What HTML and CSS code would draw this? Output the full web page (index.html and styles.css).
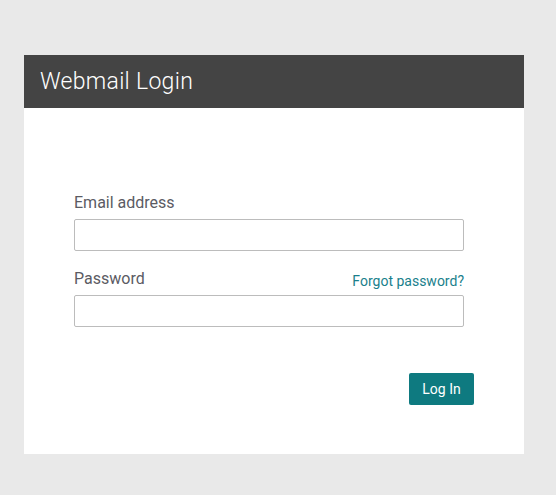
FILE: index.html
```html
<!DOCTYPE html>
<html>
<head>
<meta charset="utf-8">
<link rel="stylesheet" href="styles.css">
</head>
<body>
<div class="card">
  <div class="header"><h1 class="title">Webmail Login</h1></div>
  <form class="body">
    <label class="label">Email address</label>
    <input class="input" type="text">
    <div class="row">
      <label class="label">Password</label>
      <a class="forgot" href="#">Forgot password?</a>
    </div>
    <input class="input" type="password">
    <div class="actions">
      <button class="btn" type="button">Log In</button>
    </div>
  </form>
</div>
</body>
</html>
```

FILE: styles.css
```css
html, body {
  margin: 0;
  padding: 0;
  background: #e9e9e9;
  font-family: Roboto, "Liberation Sans", sans-serif;
}
.card {
  margin: 55px 0 0 24px;
  width: 500px;
  background: #fff;
}
.header {
  height: 53px;
  background: #444444;
  display: flex;
  align-items: center;
  padding-left: 16px;
}
.title {
  margin: 0;
  font-weight: 300;
  font-size: 23px;
  letter-spacing: 0.3px;
  color: #fff;
  line-height: 26px;
}
.body {
  padding: 85px 50px 49px 50px;
  display: flex;
  flex-direction: column;
}
.label {
  font-size: 16px;
  line-height: 19px;
  color: #5b5b63;
}
.input {
  box-sizing: border-box;
  width: 390px;
  height: 32px;
  margin: 7px 0 0 0;
  border: 1px solid #bcbcbc;
  border-radius: 2px;
  background: #fff;
  padding: 0 8px;
  font-family: inherit;
}
.row {
  width: 390px;
  margin-top: 18px;
  display: flex;
  justify-content: space-between;
  align-items: baseline;
}
.forgot {
  font-size: 14px;
  color: #1a7f8c;
  text-decoration: none;
  position: relative;
  top: 2px;
}
.actions {
  display: flex;
  justify-content: flex-end;
  margin-top: 46px;
}
.btn {
  width: 65px;
  height: 32px;
  border: none;
  border-radius: 2px;
  background: #0e7a80;
  color: #fff;
  font-family: inherit;
  font-size: 14px;
  padding: 0;
}
```
